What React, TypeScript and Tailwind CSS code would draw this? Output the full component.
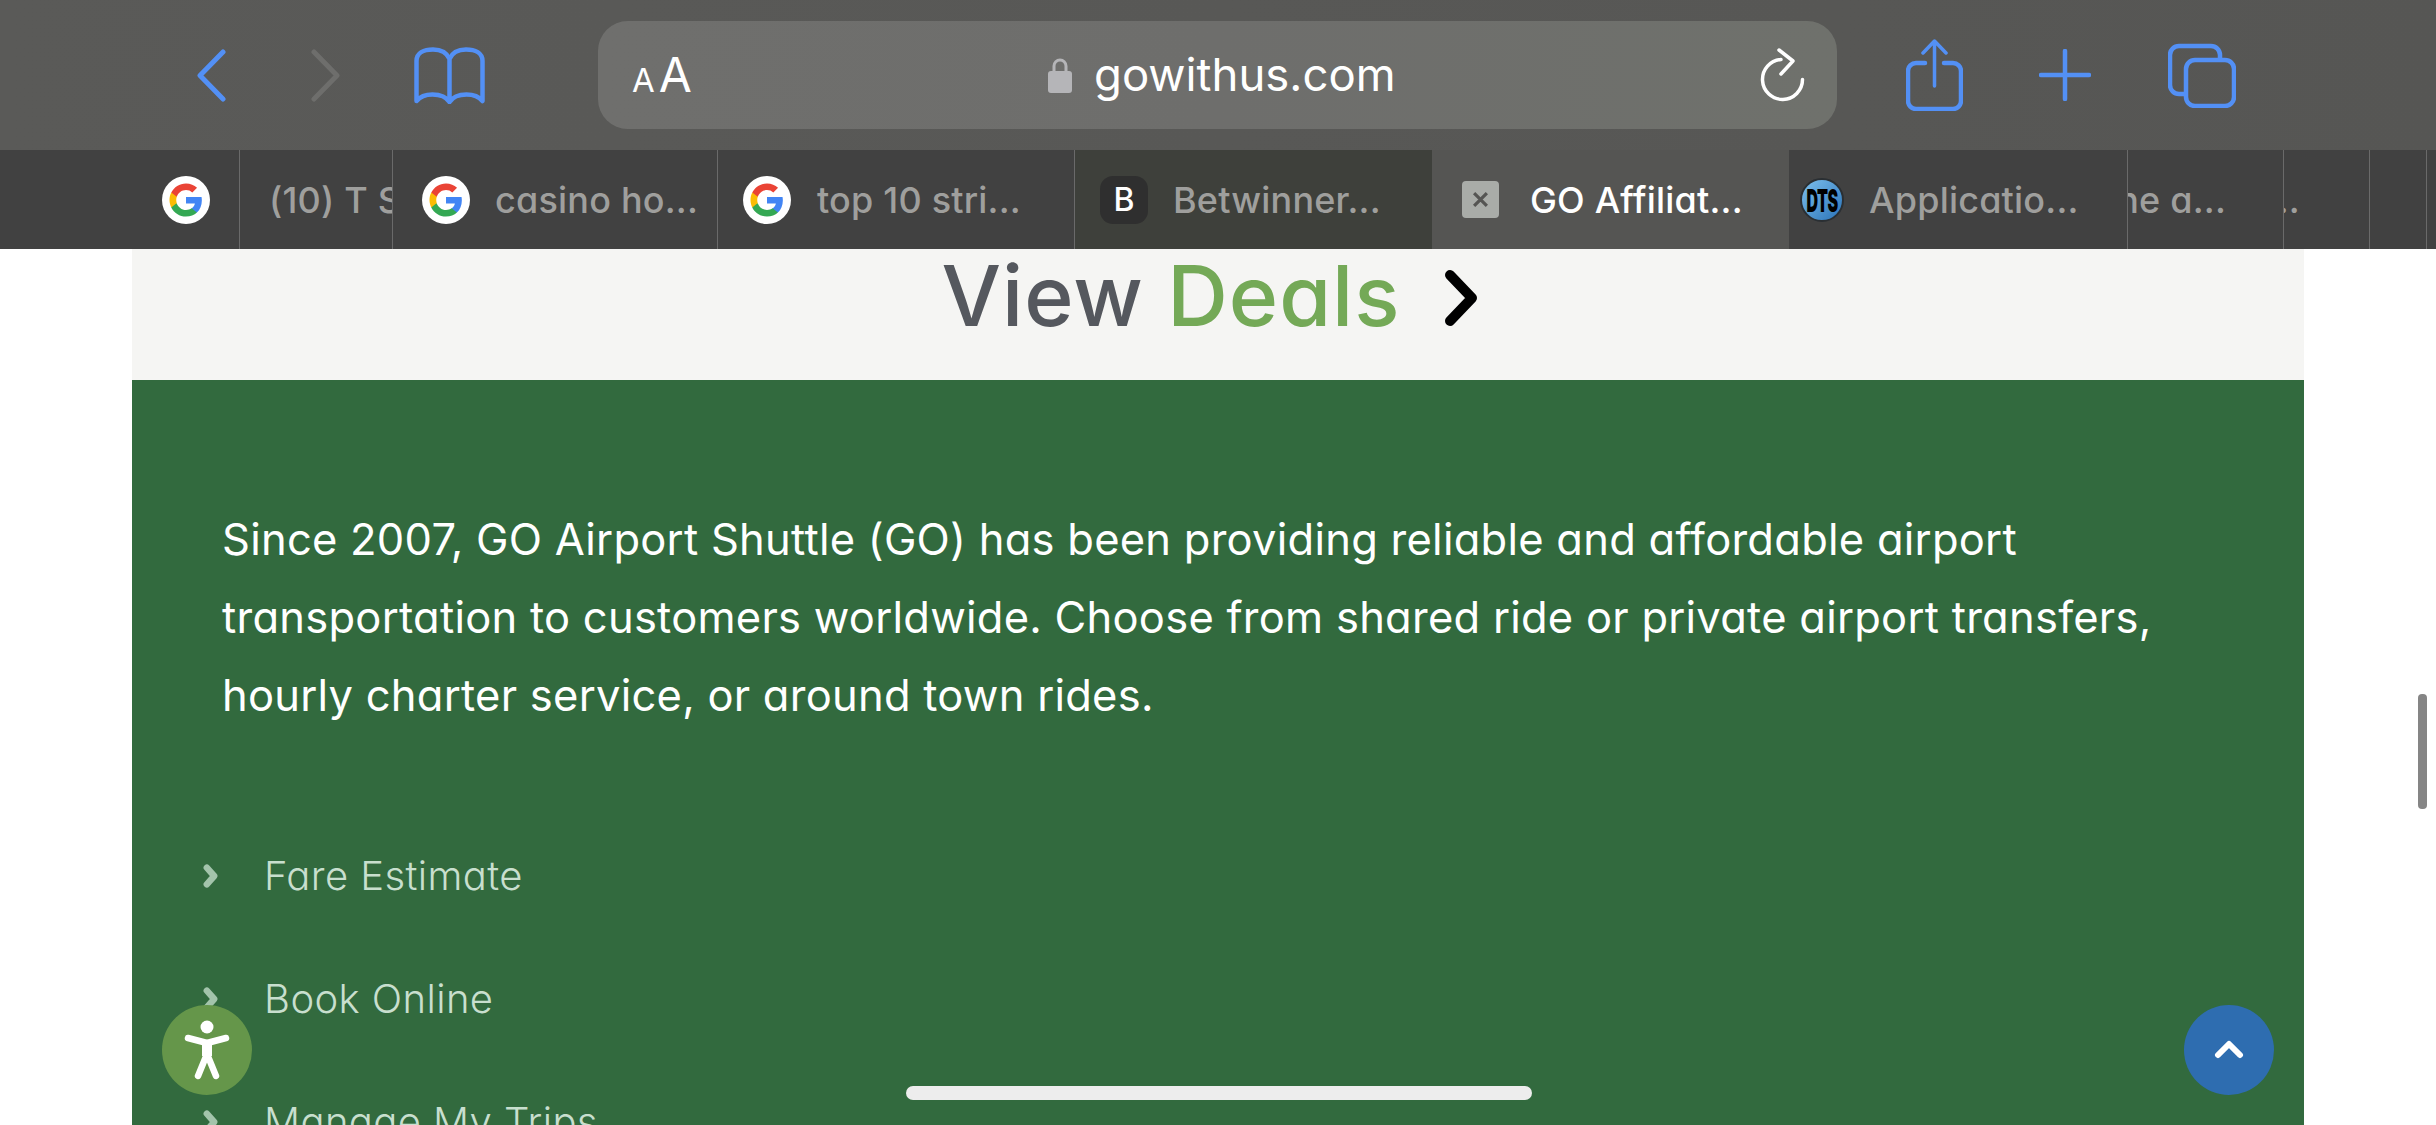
import React from "react";

function G() {
  return (
    <div className="flex h-[48px] w-[48px] shrink-0 items-center justify-center rounded-full bg-white">
      <svg viewBox="0 0 24 24" className="h-[36px] w-[36px]">
        <path fill="#4285F4" d="M22.56 12.25c0-.78-.07-1.53-.2-2.25H12v4.26h5.92c-.26 1.37-1.04 2.53-2.21 3.31v2.77h3.57c2.08-1.92 3.28-4.74 3.28-8.09z" />
        <path fill="#34A853" d="M12 23c2.97 0 5.46-.98 7.28-2.66l-3.57-2.77c-.98.66-2.23 1.06-3.71 1.06-2.86 0-5.29-1.93-6.16-4.53H2.18v2.84C3.99 20.53 7.7 23 12 23z" />
        <path fill="#FBBC05" d="M5.84 14.09c-.22-.66-.35-1.36-.35-2.09s.13-1.43.35-2.09V7.07H2.18C1.43 8.55 1 10.22 1 12s.43 3.45 1.18 4.93l2.85-2.22.81-.62z" />
        <path fill="#EA4335" d="M12 5.38c1.62 0 3.06.56 4.21 1.64l3.15-3.15C17.45 2.09 14.97 1 12 1 7.7 1 3.99 3.47 2.18 7.07l3.66 2.84c.87-2.6 3.3-4.53 6.16-4.53z" />
      </svg>
    </div>
  );
}

const tabText = "whitespace-nowrap text-[36px] font-medium leading-none tracking-[0.2px] text-[#9f9f9d]";

function ListItem({ label }: { label: string }) {
  return (
    <div className="flex h-[123px] items-center">
      <svg viewBox="0 0 16 26" className="ml-[-19px] h-[24px] w-[15px]">
        <path d="M4 4l8 9-8 9" fill="none" stroke="#a3c4ab" strokeWidth="7" strokeLinecap="round" strokeLinejoin="round" />
      </svg>
      <span className="ml-[46px] text-[40px] font-light leading-none tracking-[0.4px] text-[#c8dfce]">{label}</span>
    </div>
  );
}

export default function App() {
  return (
    <div className="relative h-[1125px] w-[2436px] overflow-hidden bg-white [font-family:Inter,sans-serif] [font-feature-settings:'cv11']">
      {/* toolbar */}
      <div className="flex h-[150px] items-center bg-gradient-to-r from-[#5a5a58] to-[#565654] pl-[196px]">
        <svg viewBox="0 0 30 53" className="h-[53px] w-[30px]">
          <path d="M27 3L4 26.500 27 50" fill="none" stroke="#5390f5" strokeWidth="5" strokeLinecap="round" strokeLinejoin="round" />
        </svg>
        <svg viewBox="0 0 30 53" className="ml-[85px] h-[53px] w-[30px]">
          <path d="M3 3l23 23.500L3 50" fill="none" stroke="#6e6e6c" strokeWidth="5" strokeLinecap="round" strokeLinejoin="round" />
        </svg>
        <svg viewBox="0 0 71 57" className="ml-[73px] h-[57px] w-[71px]">
          <path
            d="M35.500 55V12C33 6 27 2.500 19 2.500 10 2.500 2.500 6 2.500 14v40c4-5 9-6.500 16-6.500 8 0 13.500 2 17 7.500 3.500-5.500 9-7.500 17-7.500 7 0 12 1.500 16 6.500V14c0-8-7.500-11.500-16.500-11.500-8 0-14 3.500-16.500 9.500"
            fill="none"
            stroke="#5390f5"
            strokeWidth="4.500"
            strokeLinejoin="round"
            strokeLinecap="round"
          />
        </svg>
        {/* url bar */}
        <div className="ml-[113px] flex h-[108px] w-[1239px] items-center rounded-[30px] bg-gradient-to-r from-[#6f6f6d] via-[#6e6e6c] to-[#6f716c] pl-[34px] pr-[32px]">
          <div className="flex w-[61px] items-baseline text-white">
            <span className="text-[33px] font-normal leading-none">A</span>
            <span className="ml-[4px] text-[48px] font-normal leading-none">A</span>
          </div>
          <div className="ml-[355px] flex items-center">
            <svg viewBox="0 0 24 36" className="h-[36px] w-[24px]">
              <path d="M6 16V9a6 6 0 0 1 12 0v7" fill="none" stroke="#b5b5b8" strokeWidth="3" />
              <rect x="0" y="14" width="24" height="22" rx="3" fill="#b5b5b8" />
            </svg>
            <span className="ml-[22px] text-[45.500px] font-normal leading-none text-white">gowithus.com</span>
          </div>
          <svg viewBox="0 0 46 54" className="ml-auto h-[54px] w-[46px]">
            <path d="M22 11.500a20 20 0 1 0 21.500 20" fill="none" stroke="#fff" strokeWidth="3.500" strokeLinecap="round" />
            <path d="M20 2l14 11-12 13" fill="none" stroke="#fff" strokeWidth="3.500" strokeLinecap="round" strokeLinejoin="round" />
          </svg>
        </div>
        <svg viewBox="0 0 57 72" className="ml-[69px] h-[72px] w-[57px]">
          <path d="M19 24h-9a8 8 0 0 0-8 8v30a8 8 0 0 0 8 8h37a8 8 0 0 0 8-8V32a8 8 0 0 0-8-8h-9" fill="none" stroke="#5390f5" strokeWidth="4.500" strokeLinecap="round" />
          <path d="M28.500 47V3M17 14L28.500 2 40 14" fill="none" stroke="#5390f5" strokeWidth="3.500" strokeLinecap="round" strokeLinejoin="round" />
        </svg>
        <svg viewBox="0 0 52 52" className="ml-[76px] h-[52px] w-[52px]">
          <path d="M26 2v48M2 26h48" fill="none" stroke="#5390f5" strokeWidth="4.500" strokeLinecap="round" />
        </svg>
        <svg viewBox="0 0 68 66" className="ml-[77px] h-[66px] w-[68px]">
          <path d="M52 16v-3a9 9 0 0 0-9-9H11a9 9 0 0 0-9 9v30a9 9 0 0 0 9 9h5" fill="none" stroke="#5390f5" strokeWidth="4.500" />
          <rect x="18" y="18" width="48" height="46" rx="9" fill="none" stroke="#5390f5" strokeWidth="4.500" />
        </svg>
      </div>

      {/* tabs */}
      <div className="flex h-[99px] bg-[#414141]">
        <div className="flex w-[240px] shrink-0 items-center border-r border-[#6a6a6a] pl-[162px]">
          <G />
        </div>
        <div className="flex w-[153px] shrink-0 items-center overflow-hidden border-r border-[#6a6a6a] pl-[29px]">
          <span className={tabText}>(10) T Shirt</span>
        </div>
        <div className="flex w-[325px] shrink-0 items-center overflow-hidden border-r border-[#6a6a6a] pl-[29px]">
          <G />
          <span className={`${tabText} ml-[25px]`}>casino ho...</span>
        </div>
        <div className="flex w-[357px] shrink-0 items-center overflow-hidden border-r border-[#6a6a6a] pl-[25px]">
          <G />
          <span className={`${tabText} ml-[26px]`}>top 10 stri...</span>
        </div>
        <div className="flex w-[357px] shrink-0 items-center overflow-hidden bg-[#3e403b] pl-[25px]">
          <div className="flex h-[48px] w-[48px] shrink-0 items-center justify-center rounded-[13px] bg-[#2f2f2f] text-[32px] font-medium leading-none text-white">B</div>
          <span className={`${tabText} ml-[25px]`}>Betwinner...</span>
        </div>
        <div className="flex w-[357px] shrink-0 items-center overflow-hidden bg-[#555553] pl-[30px]">
          <div className="flex h-[37px] w-[37px] shrink-0 items-center justify-center rounded-[4px] bg-[#a9aca8]">
            <svg viewBox="0 0 16 16" className="h-[17px] w-[17px]">
              <path d="M2 2l12 12M14 2L2 14" stroke="#555553" strokeWidth="3" />
            </svg>
          </div>
          <span className={`${tabText} ml-[31px] text-white`}>GO Affiliat...</span>
        </div>
        <div className="flex w-[339px] shrink-0 items-center overflow-hidden border-r border-[#6a6a6a] pl-[9px]">
          <div className="relative flex h-[48px] w-[48px] shrink-0 items-center justify-center">
            <div className="flex h-[44px] w-[44px] items-center justify-center rounded-full border-2 border-[#2a2f33] bg-gradient-to-br from-[#7cc0ee] to-[#2a74b8]">
              <span className="scale-y-[2] text-[16px] font-black leading-none tracking-[-0.5px] text-black">DTS</span>
            </div>
          </div>
          <span className={`${tabText} ml-[23px]`}>Applicatio...</span>
        </div>
        <div className="flex w-[156px] shrink-0 items-center justify-end overflow-hidden border-r border-[#6a6a6a] pr-[57px]">
          <span className={tabText}>Online a...</span>
        </div>
        <div className="flex w-[86px] shrink-0 items-center justify-end overflow-hidden border-r border-[#6a6a6a] pr-[69px]">
          <span className={tabText}>a...</span>
        </div>
        <div className="w-[57px] shrink-0 border-r border-[#6a6a6a]" />
        <div className="flex-1" />
      </div>

      {/* page */}
      <div className="ml-[132px] w-[2172px]">
        <div className="flex h-[131px] items-start justify-center bg-[#f5f5f3] pr-[16px]">
          <div className="mt-[2px] flex items-center">
            <span className="text-[84px] font-medium leading-[90px] tracking-[1px] text-[#55585e]">
              View <span className="text-[#74a957]">Deals</span>
            </span>
            <svg viewBox="0 0 36 58" className="ml-[42px] mt-[4px] h-[58px] w-[36px]">
              <path d="M7 6l22 23L7 52" fill="none" stroke="#000" strokeWidth="10" strokeLinecap="round" strokeLinejoin="round" />
            </svg>
          </div>
        </div>
        <div className="h-[800px] bg-[#326a3e] px-[90px] pt-[120px]">
          <p className="text-[43.500px] font-normal leading-[78px] tracking-[0.25px] text-white">
            Since 2007, GO Airport Shuttle (GO) has been providing reliable and affordable airport
            <br />
            transportation to customers worldwide. Choose from shared ride or private airport transfers,
            <br />
            hourly charter service, or around town rides.
          </p>
          <div className="mt-[80px]">
            <ListItem label="Fare Estimate" />
            <ListItem label="Book Online" />
            <ListItem label="Manage My Trips" />
          </div>
        </div>
      </div>

      {/* overlays */}
      <div className="absolute left-[2418px] top-[694px] h-[115px] w-[9px] rounded-[4px] bg-[#858585]" />
      <div className="absolute left-[906px] top-[1086px] h-[14px] w-[626px] rounded-full bg-[#ededed]" />
      <div className="absolute left-[162px] top-[1005px] flex h-[90px] w-[90px] items-center justify-center rounded-full bg-[#65964a]">
        <svg viewBox="0 0 46 60" className="h-[60px] w-[46px]">
          <circle cx="23" cy="7" r="6.500" fill="#fff" />
          <path d="M4 18l19 5 19-5" fill="none" stroke="#fff" strokeWidth="6.500" strokeLinecap="round" strokeLinejoin="round" />
          <path d="M23 22v14" fill="none" stroke="#fff" strokeWidth="10" />
          <path d="M23 34l-9 22M23 34l9 22" fill="none" stroke="#fff" strokeWidth="6.500" strokeLinecap="round" strokeLinejoin="round" />
        </svg>
      </div>
      <div className="absolute left-[2184px] top-[1005px] flex h-[90px] w-[90px] items-center justify-center rounded-full bg-[#2e6db0]">
        <svg viewBox="0 0 30 20" className="mt-[-2px] h-[20px] w-[30px]">
          <path d="M4 16L15 5l11 11" fill="none" stroke="#fff" strokeWidth="6" strokeLinecap="round" strokeLinejoin="round" />
        </svg>
      </div>
    </div>
  );
}
